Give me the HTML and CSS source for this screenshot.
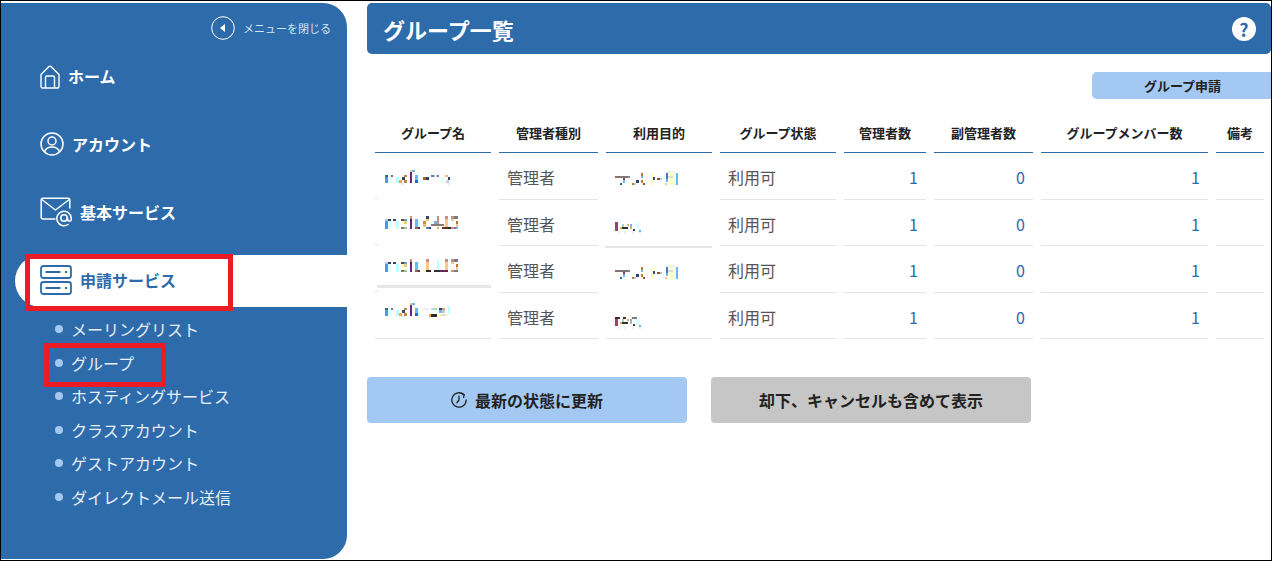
FILE: index.html
```html
<!DOCTYPE html>
<html lang="ja">
<head>
<meta charset="utf-8">
<title>グループ一覧</title>
<link rel="stylesheet" href="styles.css">
</head>
<body>
<div class="frame">
  <aside class="sidebar">
    <div class="close-row">
      <svg class="close-icon" viewBox="0 0 24 24"><circle cx="12" cy="12" r="11.3" fill="none" stroke="#fff" stroke-width="1"/><path d="M9 12l5-4v8z" fill="#fff"/></svg>
      <span>メニューを閉じる</span>
    </div>
    <nav class="nav">
      <a class="nav-item">
        <svg class="ic-home" viewBox="0 0 20 24" fill="none" stroke="#fff" stroke-width="1.4" stroke-linejoin="round"><path d="M1 9.5L9 1.5a1.4 1.4 0 0 1 2 0l8 8V21.5a1.5 1.5 0 0 1-1.5 1.5H2.500A1.500 1.500 0 0 1 1 21.500z"/><path d="M5.500 23V12.500a1.500 1.500 0 0 1 1.500-1.500h6a1.500 1.500 0 0 1 1.500 1.500V23"/></svg>
        <span>ホーム</span>
      </a>
      <a class="nav-item">
        <svg class="ic-user" viewBox="0 0 24 24" fill="none" stroke="#fff" stroke-width="1.500"><circle cx="12" cy="12" r="11"/><circle cx="12" cy="9" r="4"/><path d="M4.500 20c1-3.500 4-5 7.500-5s6.500 1.500 7.500 5"/></svg>
        <span>アカウント</span>
      </a>
      <a class="nav-item">
        <svg class="ic-mail" viewBox="0 0 32 30" fill="none" stroke="#fff" stroke-width="1.500" stroke-linecap="round" stroke-linejoin="round"><path d="M15 22H3a1.800 1.800 0 0 1-1.800-1.800V3A1.800 1.800 0 0 1 3 1.200h25A1.800 1.800 0 0 1 29.800 3v8"/><path d="M1.800 2.500L15.500 13 29.300 2.500"/><path d="M28 27.500A7.200 7.200 0 1 1 31.200 21v1.300a1.800 1.800 0 0 1-3.600 0V21"/><circle cx="24" cy="21" r="3.200"/></svg>
        <span>基本サービス</span>
      </a>
      <a class="nav-item is-active">
        <svg class="ic-server" viewBox="0 0 32 30" fill="none" stroke="#2e6bab" stroke-width="1.800"><rect x="1" y="1" width="30" height="12" rx="2.500"/><rect x="1" y="17" width="30" height="12" rx="2.500"/><path d="M5.500 7h15M5.500 23h15"/><path d="M26 6v2M26 22v2" stroke-width="2"/></svg>
        <span>申請サービス</span>
      </a>
    </nav>
    <ul class="subnav">
      <li>メーリングリスト</li>
      <li>グループ</li>
      <li>ホスティングサービス</li>
      <li>クラスアカウント</li>
      <li>ゲストアカウント</li>
      <li>ダイレクトメール送信</li>
    </ul>
  </aside>

  <main class="main">
    <header class="page-head">
      <h1>グループ一覧</h1>
      <span class="help">?</span>
    </header>
    <div class="apply-row"><button class="apply-btn">グループ申請</button></div>
    <table class="groups">
      <colgroup>
        <col class="w1"><col class="w2"><col class="w3"><col class="w4"><col class="w5"><col class="w6"><col class="w7"><col class="w8">
      </colgroup>
      <thead>
        <tr><th>グループ名</th><th>管理者種別</th><th>利用目的</th><th>グループ状態</th><th>管理者数</th><th>副管理者数</th><th>グループメンバー数</th><th>備考</th></tr>
      </thead>
      <tbody>
        <tr>
          <td class="masked erased">
            <svg class="mosaic" width="116" height="45" shape-rendering="crispEdges">
              <g id="mal1">
                <rect x="10" y="22" width="3" height="2" fill="#3d6a78"/><rect x="10" y="24" width="3" height="6" fill="#4a9be3"/><rect x="13" y="22" width="3" height="8" fill="#e4ffff"/><rect x="16" y="22" width="2" height="2" fill="#8a6a8a"/><rect x="21" y="24" width="3" height="6" fill="#bfffff"/><rect x="24" y="27" width="3" height="3" fill="#e3a85a"/><rect x="27" y="24" width="3" height="3" fill="#3f4560"/><rect x="29" y="22" width="3" height="2" fill="#b98a45"/><rect x="29" y="27" width="3" height="3" fill="#b98a45"/><rect x="26" y="30" width="3" height="2" fill="#ecebf5"/><rect x="35" y="19" width="2" height="11" fill="#6c2478"/><rect x="35" y="17" width="2" height="2" fill="#f0c890"/><rect x="37" y="17" width="3" height="2" fill="#6ab8f5"/><rect x="40" y="22" width="3" height="5" fill="#6ab8f5"/><rect x="40" y="27" width="3" height="3" fill="#1f6fc0"/><rect x="43" y="27" width="3" height="3" fill="#e4ffff"/>
              </g>
              <rect x="48" y="24" width="3" height="3" fill="#a5602f"/><rect x="51" y="24" width="3" height="3" fill="#33406a"/><rect x="56" y="22" width="3" height="2" fill="#5a7cc0"/><rect x="59" y="22" width="3" height="2" fill="#e8d8b0"/><rect x="62" y="22" width="2" height="2" fill="#5a7cc0"/><rect x="70" y="22" width="3" height="2" fill="#f2c070"/><rect x="73" y="24" width="2" height="3" fill="#33406a"/><rect x="66" y="24" width="3" height="6" fill="#e4ffff"/><rect x="71" y="27" width="3" height="3" fill="#d8c8d8"/><rect x="75" y="27" width="3" height="3" fill="#e4ffff"/><rect x="73" y="30" width="2" height="2" fill="#ecebf5"/>
            </svg>
          </td>
          <td>管理者</td>
          <td class="masked erased-full">
            <svg class="mosaic" width="106" height="45" shape-rendering="crispEdges">
              <g id="tesuto">
                <rect x="9" y="23" width="15" height="2" fill="#7c7670"/><rect x="9" y="23" width="2" height="2" fill="#a06a70"/><rect x="22" y="23" width="2" height="2" fill="#6a90c0"/><rect x="17" y="25" width="2" height="2" fill="#8a3a70"/><rect x="17" y="27" width="2" height="3" fill="#6ab8f5"/><rect x="14" y="30" width="2" height="2" fill="#2060a8"/><rect x="35" y="20" width="2" height="3" fill="#c07a30"/><rect x="35" y="23" width="2" height="2" fill="#6ab8f5"/><rect x="30" y="27" width="3" height="3" fill="#33406a"/><rect x="35" y="27" width="2" height="3" fill="#c07a30"/><rect x="26" y="30" width="2" height="2" fill="#c07a30"/><rect x="28" y="30" width="2" height="2" fill="#a8d0f5"/><rect x="37" y="30" width="2" height="2" fill="#a04a30"/><rect x="45" y="20" width="3" height="12" fill="#ffffc0"/><rect x="47" y="24" width="2" height="3" fill="#33506a"/><rect x="51" y="25" width="3" height="2" fill="#905030"/><rect x="54" y="25" width="2" height="2" fill="#a8d0f5"/><rect x="59" y="30" width="2" height="2" fill="#f8c880"/><rect x="60" y="18" width="9" height="2" fill="#eeeeee"/><rect x="60" y="20" width="2" height="6" fill="#4a78c0"/><rect x="60" y="26" width="2" height="3" fill="#6ab8f5"/><rect x="64" y="20" width="3" height="12" fill="#ffffc0"/><rect x="62" y="23" width="8" height="2" fill="#dddddd"/><rect x="67" y="20" width="3" height="12" fill="#f0ffe8"/><rect x="70" y="20" width="2" height="12" fill="#6ab8f5"/>
              </g>
            </svg>
          </td>
          <td>利用可</td><td class="num">1</td><td class="num">0</td><td class="num">1</td><td></td>
        </tr>
        <tr>
          <td class="masked erased">
            <svg class="mosaic" width="116" height="45" shape-rendering="crispEdges">
              <g id="malu">
                <rect x="10" y="19" width="3" height="2" fill="#a8d0f5"/><rect x="10" y="21" width="3" height="8" fill="#4a9be3"/><rect x="13" y="19" width="3" height="2" fill="#3f4560"/><rect x="13" y="21" width="3" height="8" fill="#e4ffff"/><rect x="18" y="19" width="3" height="2" fill="#3f4560"/><rect x="21" y="21" width="3" height="8" fill="#bfffff"/><rect x="26" y="19" width="3" height="2" fill="#5c4a35"/><rect x="29" y="19" width="3" height="2" fill="#6a9bd0"/><rect x="29" y="21" width="3" height="3" fill="#e8d070"/><rect x="26" y="22" width="3" height="3" fill="#fff4c8"/><rect x="26" y="27" width="3" height="2" fill="#87785a"/><rect x="29" y="27" width="3" height="2" fill="#8cc8a0"/><rect x="35" y="16" width="2" height="3" fill="#c89078"/><rect x="35" y="19" width="2" height="2" fill="#3f2a40"/><rect x="35" y="21" width="2" height="8" fill="#6c2478"/><rect x="40" y="19" width="3" height="8" fill="#6ab8f5"/><rect x="40" y="27" width="3" height="2" fill="#a5602f"/><rect x="43" y="27" width="2" height="2" fill="#33406a"/><rect x="43" y="19" width="2" height="8" fill="#e4ffff"/>
              </g>
              <rect x="48" y="21" width="3" height="3" fill="#d98c2a"/><rect x="48" y="24" width="3" height="3" fill="#e8c070"/><rect x="51" y="16" width="3" height="3" fill="#3f4560"/><rect x="51" y="19" width="3" height="2" fill="#f5c98a"/><rect x="51" y="27" width="3" height="2" fill="#5a7cc0"/><rect x="54" y="27" width="2" height="2" fill="#33406a"/><rect x="59" y="21" width="3" height="3" fill="#7ab0e0"/><rect x="62" y="16" width="2" height="8" fill="#c89078"/><rect x="62" y="27" width="2" height="2" fill="#e3a85a"/><rect x="56" y="24" width="13" height="2" fill="#8a7a78"/><rect x="70" y="16" width="3" height="3" fill="#c89078"/><rect x="70" y="19" width="3" height="8" fill="#f5c98a"/><rect x="67" y="27" width="6" height="2" fill="#6a2a30"/><rect x="73" y="27" width="3" height="2" fill="#2a2a2a"/><rect x="76" y="16" width="3" height="3" fill="#c89078"/><rect x="79" y="16" width="4" height="3" fill="#7a7a88"/><rect x="76" y="19" width="3" height="2" fill="#f5c98a"/><rect x="81" y="21" width="2" height="3" fill="#c07030"/><rect x="81" y="24" width="2" height="3" fill="#f5c98a"/><rect x="76" y="27" width="3" height="2" fill="#c89078"/><rect x="79" y="27" width="3" height="2" fill="#7a7a88"/><rect x="81" y="27" width="2" height="2" fill="#6ab8f5"/>
            </svg>
          </td>
          <td>管理者</td>
          <td class="masked erased-full">
            <svg class="mosaic" width="106" height="45" shape-rendering="crispEdges">
              <g id="test">
                <rect x="9" y="22" width="3" height="9" fill="#9a4070"/><rect x="9" y="30" width="3" height="1" fill="#a04a30"/><rect x="14" y="27" width="2" height="2" fill="#f0a850"/><rect x="16" y="27" width="6" height="2" fill="#333333"/><rect x="16" y="24" width="2" height="3" fill="#a0d0f0"/><rect x="21" y="24" width="2" height="2" fill="#f0a850"/><rect x="24" y="24" width="2" height="3" fill="#6ab8f5"/><rect x="24" y="27" width="2" height="2" fill="#d8b070"/><rect x="27" y="29" width="2" height="2" fill="#33406a"/><rect x="30" y="22" width="4" height="8" fill="#e4ffff"/><rect x="33" y="30" width="2" height="2" fill="#6ab8f5"/><rect x="12" y="31" width="2" height="3" fill="#eeeeee"/><rect x="18" y="31" width="2" height="3" fill="#eeeeee"/><rect x="26" y="31" width="2" height="3" fill="#eeeeee"/><rect x="33" y="32" width="2" height="2" fill="#eeeeee"/>
              </g>
              <rect class="smear" x="-1" y="46" width="107" height="2"/>
            </svg>
          </td>
          <td>利用可</td><td class="num">1</td><td class="num">0</td><td class="num">1</td><td></td>
        </tr>
        <tr>
          <td class="masked erased">
            <svg class="mosaic" width="116" height="45" shape-rendering="crispEdges">
              <use href="#malu" y="-3"/>
              <rect x="51" y="13" width="3" height="3" fill="#c89078"/><rect x="51" y="16" width="3" height="8" fill="#f5c98a"/><rect x="51" y="24" width="5" height="2" fill="#2a2a2a"/><rect x="48" y="24" width="3" height="2" fill="#fff4c8"/><rect x="62" y="13" width="2" height="11" fill="#c8ffff"/><rect x="59" y="24" width="6" height="2" fill="#33333a"/><rect x="70" y="13" width="3" height="3" fill="#c89078"/><rect x="70" y="16" width="3" height="8" fill="#f5c98a"/><rect x="65" y="24" width="8" height="2" fill="#6a2a50"/><rect x="76" y="13" width="3" height="3" fill="#c89078"/><rect x="79" y="13" width="4" height="3" fill="#7a7a88"/><rect x="76" y="16" width="3" height="2" fill="#f5c98a"/><rect x="81" y="18" width="2" height="3" fill="#c07030"/><rect x="81" y="21" width="2" height="3" fill="#f5c98a"/><rect x="76" y="24" width="3" height="2" fill="#c89078"/><rect x="79" y="24" width="4" height="2" fill="#7a7a88"/>
              <rect class="smear" x="2" y="39" width="114" height="3"/>
            </svg>
          </td>
          <td>管理者</td>
          <td class="masked erased-full">
            <svg class="mosaic" width="106" height="45" shape-rendering="crispEdges"><use href="#tesuto" y="1"/></svg>
          </td>
          <td>利用可</td><td class="num">1</td><td class="num">0</td><td class="num">1</td><td></td>
        </tr>
        <tr>
          <td class="masked">
            <svg class="mosaic" width="116" height="45" shape-rendering="crispEdges">
              <use href="#mal1" y="-7"/>
              <rect x="48" y="15" width="6" height="2" fill="#eeeeee"/><rect x="54" y="21" width="2" height="3" fill="#f0a850"/><rect x="56" y="21" width="6" height="3" fill="#2a2a2a"/><rect x="56" y="15" width="4" height="2" fill="#a8e0f0"/><rect x="60" y="15" width="2" height="2" fill="#e8c890"/><rect x="64" y="15" width="3" height="2" fill="#33406a"/><rect x="67" y="15" width="3" height="2" fill="#d8a070"/><rect x="64" y="17" width="3" height="3" fill="#6ab8f5"/><rect x="67" y="17" width="3" height="3" fill="#c8c8c8"/><rect x="64" y="21" width="3" height="2" fill="#fff4a0"/><rect x="67" y="21" width="3" height="2" fill="#c8d8f0"/><rect x="73" y="13" width="2" height="8" fill="#c0ffff"/><rect x="70" y="21" width="3" height="2" fill="#fff4c8"/>
            </svg>
          </td>
          <td>管理者</td>
          <td class="masked">
            <svg class="mosaic" width="106" height="45" shape-rendering="crispEdges">
              <use href="#test" y="2"/>
              <rect x="9" y="24" width="5" height="2" fill="#3f2a30"/><rect x="17" y="24" width="3" height="2" fill="#33333a"/><rect x="26" y="24" width="5" height="2" fill="#8a7a70"/>
            </svg>
          </td>
          <td>利用可</td><td class="num">1</td><td class="num">0</td><td class="num">1</td><td></td>
        </tr>
      </tbody>
    </table>
    <div class="actions">
      <button class="action refresh">
        <svg class="ic-clock" viewBox="0 0 16 16" fill="none" stroke="#222" stroke-width="1.300" stroke-linecap="round" stroke-linejoin="round"><path d="M13 2.800A7.200 7.200 0 1 0 15.200 8"/><path d="M10.500 1.500l2.600 1.200-.5 2.600"/><path d="M8 4.200V8l-2.200 2.800"/></svg>
        <span>最新の状態に更新</span>
      </button>
      <button class="action cancelled">却下、キャンセルも含めて表示</button>
    </div>
  </main>
</div>
<div class="callout callout-service"></div>
<div class="callout callout-group"></div>
</body>
</html>
```
FILE: styles.css
```css
* { box-sizing: border-box; }
html, body { margin: 0; padding: 0; }
body {
  position: relative;
  width: 1272px;
  height: 561px;
  overflow: hidden;
  background: #fff;
  border: 1px solid #000;
  font-family: "Noto Sans CJK JP", "Noto Sans", sans-serif;
  color: #222;
}
.frame { display: flex; height: 100%; padding-top: 2px; }

/* Sidebar */
.sidebar {
  flex: 0 0 346px;
  height: 556px;
  background: #2e6bab;
  border-radius: 0 24px 24px 0;
  color: #fff;
}
.close-row {
  display: flex;
  align-items: center;
  justify-content: flex-end;
  gap: 8px;
  padding: 13px 16px 0 0;
  font-size: 11px;
  color: #d5e3f2;
}
.close-icon { width: 24px; height: 24px; }
.nav { display: flex; flex-direction: column; gap: 16px; margin: 11px 0 0 14px; }
.nav-item {
  display: flex;
  align-items: center;
  gap: 8px;
  height: 52px;
  padding: 0 0 2px 25px;
  font-size: 16px;
  font-weight: 700;
  border-radius: 26px 0 0 26px;
}
.nav-item svg { flex: none; display: block; }
.ic-home { width: 20px; height: 24px; margin-top: 1px; }
.ic-user { width: 24px; height: 24px; }
.ic-mail { width: 32px; height: 30px; }
.ic-server { width: 32px; height: 30px; }
.is-active { background: #fff; color: #2e6bab; }
.subnav { list-style: none; margin: 5.7px 0 0; padding: 0 0 0 54px; }
.subnav li {
  display: flex;
  align-items: center;
  gap: 8px;
  height: 33.5px;
  font-size: 16px;
  color: #e6eef7;
}
.subnav li::before {
  content: "";
  width: 8px;
  height: 8px;
  border-radius: 50%;
  background: #a3c8f2;
  flex: none;
}

/* Main */
.main { flex: 1; min-width: 0; margin-left: 20px; }
.page-head {
  display: flex;
  align-items: center;
  justify-content: space-between;
  height: 51px;
  padding: 0 16px;
  background: #2e6bab;
  border-radius: 5px;
}
.page-head h1 { margin: 0; font-size: 22px; font-weight: 700; color: #fff; }
.help {
  width: 24px;
  height: 24px;
  border-radius: 50%;
  background: #fff;
  color: #2e6bab;
  font-size: 18px;
  font-weight: 700;
  line-height: 24px;
  text-align: center;
  margin-right: -1px;
}
.apply-row { display: flex; justify-content: flex-end; margin-top: 18px; }
.apply-btn {
  width: 179px;
  height: 27px;
  padding: 0 0 0 2px;
  border: 0;
  background: #a3c8f2;
  border-radius: 5px 0 0 5px;
  font: 700 13px "Noto Sans CJK JP", sans-serif;
  color: #222;
}

/* Table */
.groups {
  width: 905px;
  margin-top: 14px;
  table-layout: fixed;
  border-collapse: separate;
  border-spacing: 8px 0;
}
.w1 { width: 116px; } .w2 { width: 99px; } .w3 { width: 106px; } .w4 { width: 116px; }
.w5 { width: 82px; } .w6 { width: 99px; } .w7 { width: 167px; } .w8 { width: 48px; }
.groups th {
  height: 40px;
  padding: 0 0 1px;
  font-size: 13px;
  font-weight: 700;
  text-align: center;
  color: #222;
  border-bottom: 1px solid #2e6bab;
}
.groups td {
  height: 46.5px;
  padding: 2px 8px 0;
  font-size: 16px;
  color: #555;
  border-bottom: 1px solid #e5e5e5;
}
.groups tbody tr:nth-child(even) td { padding-top: 4px; }
.groups td.num { text-align: right; color: #2e6bab; }
.groups td.masked,
.groups tbody tr:nth-child(even) td.masked { padding: 0; vertical-align: top; }
.groups td.erased {
  border-bottom-color: transparent;
  background: linear-gradient(#e5e5e5, #e5e5e5) left bottom / 3px 1px no-repeat;
}
.groups td.erased-full { border-bottom-color: transparent; }
.mosaic { display: block; overflow: visible; }
.smear { fill: #e6e6e6; }

/* Actions */
.actions { display: flex; gap: 24px; margin-top: 38px; }
.action {
  display: flex;
  align-items: center;
  justify-content: center;
  gap: 8px;
  width: 320px;
  height: 46px;
  padding: 0;
  border: 0;
  border-radius: 4px;
  font: 700 16px "Noto Sans CJK JP", sans-serif;
  color: #222;
}
.refresh { background: #a3c8f2; }
.cancelled { background: #c6c6c6; }
.ic-clock { width: 16px; height: 16px; flex: none; }

/* Annotation boxes drawn over the screenshot */
.callout { position: absolute; border: 5px solid #ed1c24; }
.callout-service { left: 24px; top: 253px; width: 208px; height: 57px; }
.callout-group { left: 43px; top: 342px; width: 122px; height: 44px; }
```
